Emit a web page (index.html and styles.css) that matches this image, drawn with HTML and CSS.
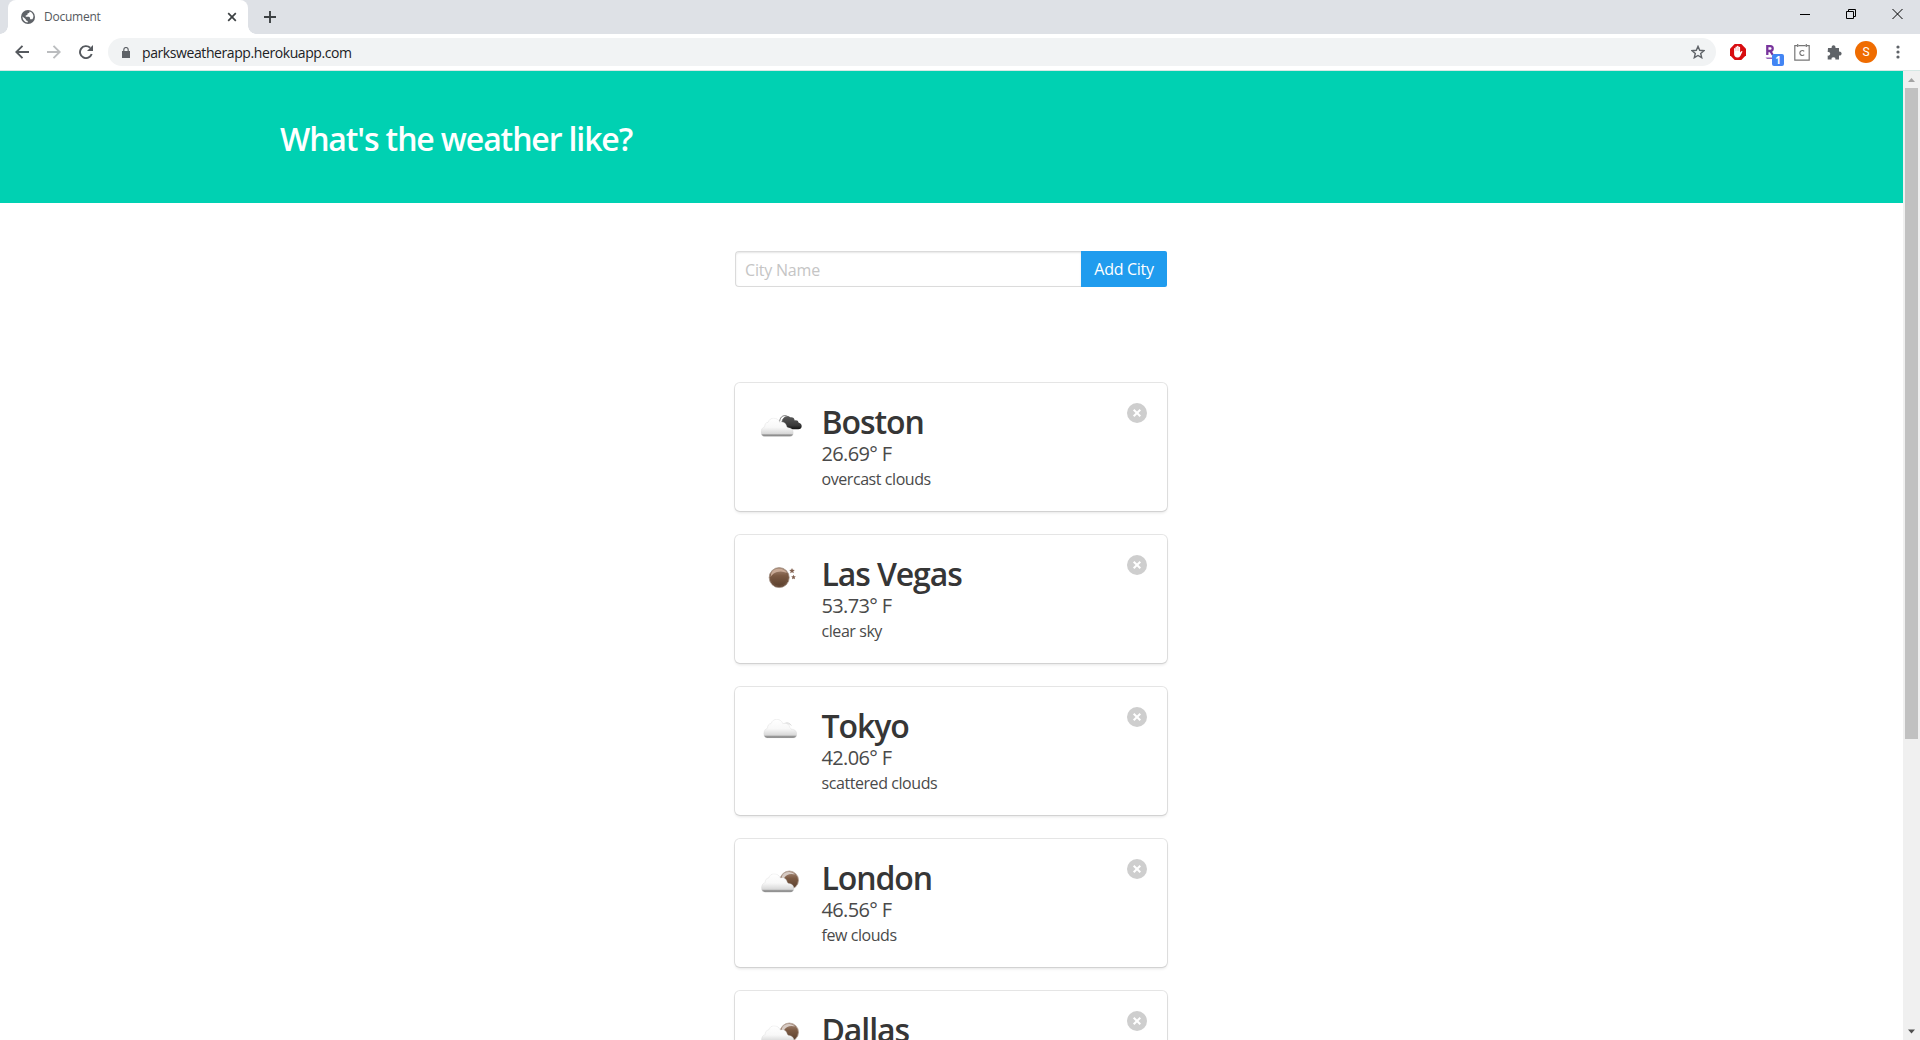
FILE: index.html
```html
<!DOCTYPE html>
<html lang="en">
<head>
<meta charset="utf-8">
<title>Document</title>
<link rel="stylesheet" href="styles.css">
</head>
<body>
<svg class="defs" width="0" height="0" aria-hidden="true">
  <defs>
    <linearGradient id="white" x1="0" y1="0" x2="0" y2="1"><stop offset="0" stop-color="#fff"/><stop offset=".5" stop-color="#f8f8f8"/><stop offset=".84" stop-color="#d8d8d8"/><stop offset=".91" stop-color="#989898"/><stop offset="1" stop-color="#808080"/></linearGradient>
    <linearGradient id="brown" x1="0" y1="0" x2="0" y2="1"><stop offset="0" stop-color="#a98d7b"/><stop offset=".4" stop-color="#7c5a43"/><stop offset="1" stop-color="#573d2b"/></linearGradient>
    <linearGradient id="dark" x1="0" y1="0" x2="0" y2="1"><stop offset="0" stop-color="#5a5a5a"/><stop offset=".7" stop-color="#3a3a3a"/><stop offset="1" stop-color="#111"/></linearGradient>
    <symbol id="cloud" viewBox="0 0 33 19"><path d="M4 18.700C1.600 18.700.3 17 .3 14.500C.3 11.800 1.600 9.700 4 9C3.800 6.500 5.100 4.700 7.400 4.500C8.500 1.600 10.500.3 13 .3C16 .3 18.200 2 19 4.600C22 3.400 25 4.800 25.800 8C26 9.200 26.700 9.700 27.700 9.900C30.800 10.300 32.700 12 32.700 14.800C32.700 17.300 31.200 18.700 29 18.700Z" fill="url(#white)" stroke="#d6d6d6" stroke-width=".35"/></symbol>
    <symbol id="few" viewBox="0 0 50 50"><circle cx="34.300" cy="21.200" r="9.200" fill="url(#brown)" stroke="#b3a298" stroke-width=".8"/><path d="M26.500 18Q28.500 12.700 34.500 13Q38 13.300 40 15.500Q32 13.700 28.500 20Z" fill="#d7cbc4"/><use href="#cloud" x="5.700" y="14.500" width="34" height="19"/></symbol>
    <symbol id="close" viewBox="0 0 20 20"><circle cx="10" cy="10" r="10" fill="#cecece"/><path d="M6.700 6.700l6.600 6.600M13.300 6.700l-6.600 6.600" stroke="#fff" stroke-width="2"/></symbol>
  </defs>
</svg>
<div class="browser">
  <header class="tabs">
    <div class="tab">
      <svg class="globe" width="14" height="14" viewBox="0 0 14 14"><circle cx="7" cy="7" r="7" fill="#5f6368"/><path d="M8.500 1.500C8.700 3 7.500 3.400 6.500 3.500C6.800 5 5.800 5.400 4.800 5.300L4.700 6.700H8C9.200 6.900 9 8.500 9.200 9.200H11.400C12.300 8 12.600 6.500 12.300 5.300C11.700 3.300 10.500 2 8.500 1.500ZM1.500 6.600L4.800 9.200V10.300L6.700 11V12.500C3.600 12.400 1.500 9.800 1.500 6.600Z" fill="#fff"/></svg>
      <span class="tab-title">Document</span>
      <svg class="tab-close" width="10" height="10" viewBox="0 0 10 10"><path d="M1.200 1.200l7.600 7.600M8.800 1.200L1.200 8.800" stroke="#3c4043" stroke-width="1.700"/></svg>
    </div>
    <svg class="plus" width="12" height="12" viewBox="0 0 12 12"><path d="M6 0v12M0 6h12" stroke="#3c4043" stroke-width="1.900"/></svg>
    <div class="window-controls">
      <svg width="10" height="12" viewBox="0 0 10 12"><path d="M0 6.500h10" stroke="#000"/></svg>
      <svg width="10" height="12" viewBox="0 0 10 12"><path d="M.5 3.500h7v7h-7zM2.500 3.500v-2h7v7h-2" fill="none" stroke="#000"/></svg>
      <svg width="11" height="12" viewBox="0 0 11 12"><path d="M.5 1l10 10M10.500 1l-10 10" stroke="#000"/></svg>
    </div>
  </header>
  <nav class="toolbar">
    <svg class="back" width="14" height="14" viewBox="0 0 14 14"><path d="M14 7H1.500M7.500.8L1.300 7l6.200 6.200" fill="none" stroke="#55595e" stroke-width="1.900"/></svg>
    <svg class="forward" width="14" height="14" viewBox="0 0 14 14"><path d="M0 7h12.500M6.500.8L12.700 7l-6.200 6.200" fill="none" stroke="#bbbdbf" stroke-width="1.900"/></svg>
    <svg class="reload" width="14" height="14" viewBox="0 0 14 14"><path d="M12.700 9A6 6 0 1 1 11.200 2.800" fill="none" stroke="#55595e" stroke-width="1.900"/><path d="M14 0v6H8Z" fill="#55595e"/></svg>
    <div class="omnibox">
      <svg width="8" height="11" viewBox="0 0 8 11"><path d="M0 4h8v7H0z" fill="#5f6368"/><path d="M1.800 4.500V2.700a2.200 2.200 0 0 1 4.400 0V4.500" fill="none" stroke="#5f6368" stroke-width="1.200"/></svg>
      <span class="url">parksweatherapp.herokuapp.com</span>
      <svg class="star" width="14" height="14" viewBox="0 0 14 14"><path d="M7 1.400l1.700 3.900 4.200.4-3.200 2.800 1 4.200L7 10.500l-3.700 2.200 1-4.200L1.100 5.700l4.200-.4Z" fill="none" stroke="#5f6368" stroke-width="1.400"/></svg>
    </div>
    <div class="extensions">
      <svg width="16" height="16" viewBox="0 0 16 16"><path d="M4.700 0h6.600L16 4.700v6.600L11.300 16H4.700L0 11.300V4.700Z" fill="#d80d10"/><path d="M4.100 8.500V4.700a.7.7 0 0 1 1.400 0V3.300a.7.7 0 0 1 1.500 0V2.600a.8.8 0 0 1 1.600 0V3.400a.7.7 0 0 1 1.500 0V8.600l1.200-1.300q1-.5 1.200.3L10.300 12q-1 1.600-3 1.500-3-.2-3.200-3.200Z" fill="#fff"/><path d="M5.700 4v3M7.200 3v4M8.700 3.500V7" stroke="#e88" stroke-width=".4"/></svg>
      <div class="rakuten"><svg width="12" height="16" viewBox="0 0 12 16"><path d="M2.300 11V2.200H5.300A2.400 2.400 0 0 1 5.300 7H2.500M5.300 7L7.800 11" fill="none" stroke="#78349c" stroke-width="2.300"/><path d="M.5 13.500h8L7 15H2Z" fill="#9862ba"/></svg><span class="count">1</span></div>
      <svg width="16" height="17" viewBox="0 0 16 17"><path d="M3 1.700H.8v14.500h14.400V1.700H13M4.500 1.700h7M3.700 0v3M12.300 0v3" fill="none" stroke="#777" stroke-width="1.200"/><path d="M10.200 7.300A2.500 2.500 0 1 0 10.200 10.700" fill="none" stroke="#777" stroke-width="1.200"/></svg>
      <svg class="puzzle" width="15" height="15" viewBox="0 0 15 15"><path d="M1 3h3.700a2 2 0 1 1 3.700 0H12v3.700a2 2 0 1 1 0 3.800V14.500H8.300a1.900 1.900 0 1 0-3.700 0H.7V10.600a1.900 1.900 0 1 0 0-3.600Z" fill="#5f6368"/></svg>
      <span class="avatar">S</span>
      <svg class="menu" width="4" height="14" viewBox="0 0 4 14"><g fill="#5f6368"><circle cx="2" cy="2" r="1.600"/><circle cx="2" cy="7" r="1.600"/><circle cx="2" cy="12" r="1.600"/></g></svg>
    </div>
  </nav>
  <div class="viewport">
    <main class="page">
      <section class="hero"><h1>What's the weather like?</h1></section>
      <section class="section">
        <form class="field"><input class="city-input" type="text" placeholder="City Name"><button class="add" type="button">Add City</button></form>
      </section>
      <section class="section cities">
        <article class="box">
          <svg class="weather" viewBox="0 0 50 50"><path d="M29.500 24.500Q26.500 23.500 27.200 20.300Q25.200 16.500 28.500 14.500Q32 11.500 35.300 14.200Q39.300 13.700 39.700 17.500Q43 16.800 43.700 19.800Q46.700 20.300 46.700 23.300Q46.500 26.300 43.300 26.300H32Z" fill="url(#dark)"/><path d="M24.500 18.500Q25.500 12.500 30 12.600Q32 12.700 33 13.700Q28.500 13 27 18.500" fill="#fff" stroke="#666" stroke-width=".8"/><use href="#cloud" x="5.700" y="14.800" width="33" height="19"/></svg>
          <div class="details"><h2>Boston</h2><p class="temp">26.69° F</p><p class="desc">overcast clouds</p></div>
          <svg class="close"><use href="#close"/></svg>
        </article>
        <article class="box">
          <svg class="weather" viewBox="0 0 50 50"><circle cx="24.200" cy="22.600" r="10" fill="url(#brown)" stroke="#a28f83" stroke-width=".8"/><circle cx="24.200" cy="22.600" r="8.700" fill="none" stroke="#795b47" stroke-width=".6"/><path d="M15.500 22Q15.700 13.800 23.700 13.500Q29.500 13.500 32 18Q27 15.500 22 17Q18 18 15.500 22Z" fill="#c9aa96"/><path d="M37 13l.8 1.800 2 .2-1.500 1.300.5 2-1.800-1-1.800 1 .5-2-1.500-1.300 2-.2ZM38.500 19.800l.7 1.500 1.700.2-1.300 1.100.4 1.700-1.500-.9-1.500.9.400-1.700-1.300-1.100 1.700-.2Z" fill="#81604f"/></svg>
          <div class="details"><h2>Las Vegas</h2><p class="temp">53.73° F</p><p class="desc">clear sky</p></div>
          <svg class="close"><use href="#close"/></svg>
        </article>
        <article class="box">
          <svg class="weather" viewBox="0 0 50 50"><path d="M29 17Q33 13.800 36.500 18.500" fill="#eee" stroke="#ccc" stroke-width=".6"/><use href="#cloud" x="8.300" y="12" width="34" height="19.400"/></svg>
          <div class="details"><h2>Tokyo</h2><p class="temp">42.06° F</p><p class="desc">scattered clouds</p></div>
          <svg class="close"><use href="#close"/></svg>
        </article>
        <article class="box">
          <svg class="weather"><use href="#few"/></svg>
          <div class="details"><h2>London</h2><p class="temp">46.56° F</p><p class="desc">few clouds</p></div>
          <svg class="close"><use href="#close"/></svg>
        </article>
        <article class="box">
          <svg class="weather"><use href="#few"/></svg>
          <div class="details"><h2>Dallas</h2></div>
          <svg class="close"><use href="#close"/></svg>
        </article>
      </section>
    </main>
    <aside class="scrollbar">
      <svg width="17" height="17" viewBox="0 0 17 17"><path d="M5 11l3.500-4 3.500 4Z" fill="#a3a3a3"/></svg>
      <div class="thumb"></div>
      <svg class="down" width="17" height="17" viewBox="0 0 17 17"><path d="M5 6.500h7l-3.500 4Z" fill="#505050"/></svg>
    </aside>
  </div>
</div>
</body>
</html>
```
FILE: styles.css
```css
* { box-sizing: border-box; margin: 0; padding: 0; }
body { font-family: "Open Sans", "Noto Sans", sans-serif; color: #4a4a4a; background: #fff; overflow: hidden; }
svg { display: block; flex: none; }
.defs { position: absolute; }
.browser { height: 1040px; display: flex; flex-direction: column; }

.tabs { height: 34px; flex: none; background: #dee1e6; display: flex; padding-left: 8px; }
.tab { width: 240px; background: #fff; border-radius: 8px 8px 0 0; display: flex; align-items: center; padding: 0 11px 0 13px; position: relative; }
.tab::before, .tab::after { content: ""; position: absolute; bottom: 0; width: 8px; height: 8px; }
.tab::before { left: -8px; background: radial-gradient(circle at 0 0, #dee1e6 7.5px, #fff 8px); }
.tab::after { right: -8px; background: radial-gradient(circle at 100% 0, #dee1e6 7.5px, #fff 8px); }
.tab-title { margin-left: 9px; padding-bottom: 1px; font-size: 12px; letter-spacing: -.25px; color: #55595e; }
.tab-close { margin-left: auto; }
.plus { margin: 11px 0 0 16px; }
.window-controls { margin-left: auto; display: flex; gap: 36px; padding: 8px 17px 0 0; }

.toolbar { height: 37px; flex: none; display: flex; align-items: center; padding: 0 20px 0 15px; border-bottom: 1px solid #d5e8e5; }
.forward { margin-left: 18px; }
.reload { margin-left: 18px; }
.omnibox { margin-left: 15px; width: 1608px; height: 28px; flex: none; border-radius: 14px; background: #f1f3f4; display: flex; align-items: center; padding: 0 11px 0 14px; }
.url { margin-left: 12px; font-size: 14px; letter-spacing: -.41px; color: #202124; }
.star { margin-left: auto; }
.extensions { margin-left: 14px; display: flex; align-items: center; }
.rakuten { position: relative; margin: 0 9px 0 19px; width: 20px; }
.count { position: absolute; left: 7px; top: 10px; width: 12px; height: 12px; border-radius: 2px; background: #4285f4; color: #fff; font-size: 10px; line-height: 12px; font-weight: 700; text-align: center; }
.puzzle { margin-left: 17px; }
.avatar { margin-left: 13px; width: 22px; height: 22px; border-radius: 50%; background: #ef6c00; color: #fff; font: 12px/22px Roboto, sans-serif; text-align: center; }
.menu { margin-left: 19px; }

.viewport { display: flex; flex: 1; min-height: 0; }
.page { flex: 1; overflow: hidden; }
.hero { background: #00d1b2; padding: 50px 280px 46px; height: 132px; }
.hero h1 { color: #fff; font-size: 32px; line-height: 36px; font-weight: 600; letter-spacing: -1.12px; white-space: nowrap; }
.section { width: 432px; margin: 0 0 0 735px; padding: 48px 0; }
.field { display: flex; }
.city-input { width: 346px; height: 36px; border: 1px solid #dbdbdb; border-right: 0; border-radius: 4px 0 0 4px; padding: 2px 9px 0; font: 16px "Open Sans", sans-serif; letter-spacing: -.2px; box-shadow: inset 0 1px 2px rgba(10,10,10,.1); }
.city-input::placeholder { color: #c5c5c5; }
.add { width: 86px; height: 36px; border: 0; border-radius: 0 2px 2px 0; background: #209cee; color: #fff; font: 16px "Open Sans", sans-serif; letter-spacing: -.3px; white-space: nowrap; }
.cities { display: flex; flex-direction: column; gap: 24px; }
.box { height: 128px; flex: none; border-radius: 5px; padding: 20px; display: flex; background: #fff; box-shadow: 0 2px 3px rgba(10,10,10,.1), 0 0 0 1px rgba(10,10,10,.1); }
.weather { width: 50px; height: 50px; }
.details { margin-left: 16.500px; flex: 1; white-space: nowrap; }
.details h2 { padding-top: 1px; color: #363636; font-size: 32px; line-height: 36px; font-weight: 600; letter-spacing: -1.1px; }
.temp { font-size: 20px; line-height: 28px; letter-spacing: -.65px; }
.desc { margin-top: -1px; font-size: 16px; line-height: 24px; letter-spacing: -.43px; }
.close { width: 20px; height: 20px; }

.scrollbar { width: 17px; background: #f0f0f0; display: flex; flex-direction: column; align-items: center; }
.thumb { width: 13px; height: 651px; background: #c1c1c1; }
.down { margin-top: auto; }
```
